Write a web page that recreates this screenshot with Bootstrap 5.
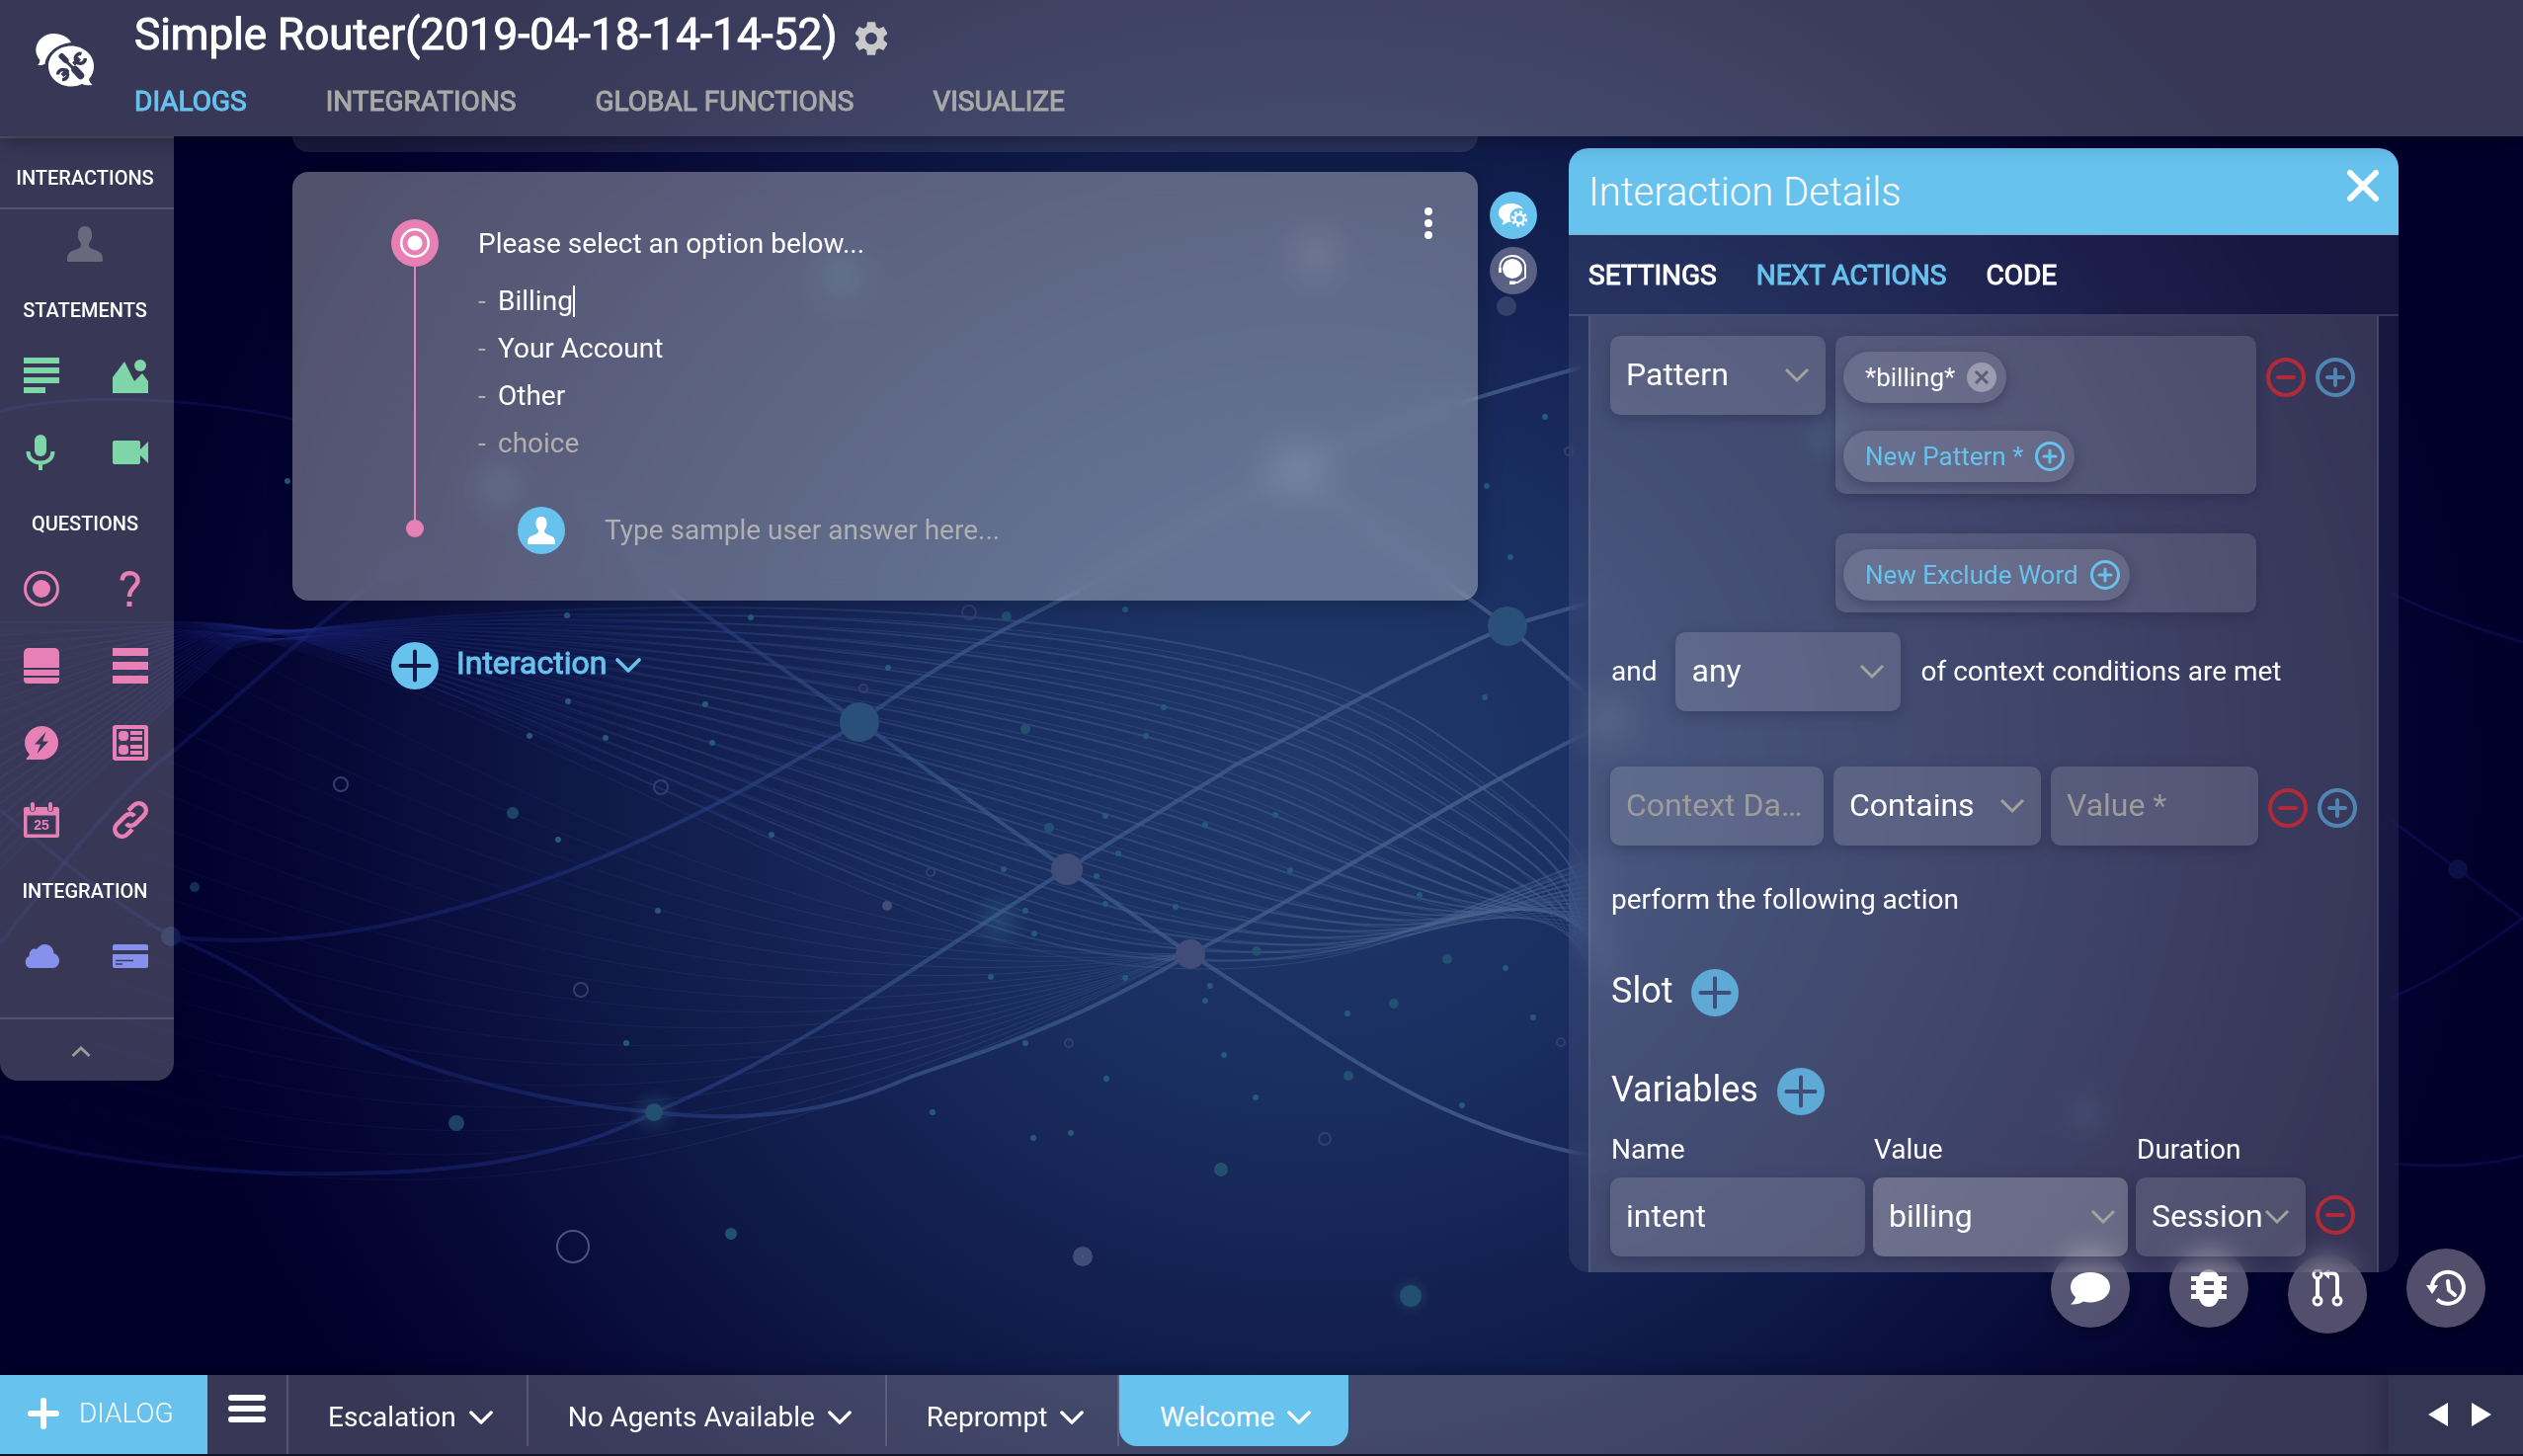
<!DOCTYPE html>
<html lang="en">
<head>
<meta charset="utf-8">
<meta name="viewport" content="width=device-width, initial-scale=1">
<title>Simple Router</title>
<link rel="stylesheet" href="https://cdn.jsdelivr.net/npm/bootstrap@5.3.0/dist/css/bootstrap.min.css">
<style>
:root{--sky:#68c2ee;--pink:#e680b5;--green:#7ed6a8;--iris:#8591ea;--dim:#a9a9a9}
body{font-family:Roboto,"Liberation Sans",sans-serif;font-size:28px;line-height:36px;color:#fff;background:#00002b;height:100vh;overflow:hidden}
svg{display:block;flex:none}
a{text-decoration:none}
.backdrop{position:fixed;inset:0;width:100%;height:100%;z-index:-1}
.glass{background:rgba(187,183,187,.3)}
.btn-plain{background:none;border:0;padding:0;color:inherit;line-height:0;display:block}
.sky{color:var(--sky)}.pink{color:var(--pink)}.green{color:var(--green)}.iris{color:var(--iris)}
.bg-sky{background:var(--sky)}.bg-pink{background:var(--pink)}.bg-slate{background:#5a6184}
.strong-thin{font-weight:400;-webkit-text-stroke:1px currentColor}
/* header */
.topbar{height:138px;box-shadow:0 0 24px rgba(0,0,0,.45);z-index:3}
.logo-cell{width:136px;padding:32px 0 0 36px}
.app-title{font-size:44px;line-height:52px;padding-top:9px}
.title-row{gap:18px}
.main-tabs{gap:80px;padding-top:24px}
.main-tabs a{color:var(--dim)}
.main-tabs a.active,.panel-tabs a.active{color:var(--sky)}
/* palette */
.palette{width:176px;border-radius:0 0 18px 18px;border-top:2px solid rgba(255,255,255,.14);overflow:hidden}
.palette h2{font-size:20px;line-height:24px;font-weight:500;text-align:center;margin:0;padding-right:4px}
.palette-head{padding:28px 0 18px;border-bottom:2px solid rgba(255,255,255,.14)}
.palette-person{height:69px;padding-right:4px;color:#69697d}
.palette .group-name{height:60px;padding-top:21px}
.tool-grid{display:grid;grid-template-columns:90px 90px;grid-auto-rows:78px;margin-left:-3px}
.tool-grid .btn-plain{display:grid;place-items:center}
.palette-foot{height:64px;margin-top:23px;padding-top:4px;border-top:2px solid rgba(255,255,255,.14);color:#9b9b98;padding-right:12px}
/* flow */
.workspace{min-height:0}
.flow{padding:0 12px 0 120px;min-width:0}
.card-prev{height:16px;border-radius:0 0 16px 16px;background:rgba(255,255,255,.1)}
.flow-card{margin-top:20px;height:434px;border-radius:16px;background:rgba(250,250,245,.33);backdrop-filter:blur(12px);box-shadow:0 2px 24px rgba(0,0,0,.25);padding:32px 46px 0 100px}
.rail{width:48px;padding-top:16px}
.rail-line{width:2px;height:258px;background:var(--pink)}
.rail-dot{width:18px;height:18px;border-radius:9px;background:var(--pink);margin-top:-2px}
.disc{width:48px;height:48px;border-radius:50%;display:grid;place-items:center;flex:none}
.flow-body{padding:17px 0 0 40px}
.bare{background:none;border:0;padding:0;color:#fff;outline:0;height:48px;line-height:48px;min-width:0}
.bare::placeholder{color:#b0b0b0;opacity:1}
.choice-row{height:48px}
.choice-row .dash{width:20px;color:#b0b0b0}
.choices{padding-top:10px}
.short{width:76px}
.caret{width:2px;height:32px;background:#fff}
.answer-row{padding:40px 0 0 40px}
.add-row{padding:42px 0 0 100px}
.add-row span{font-size:32px;line-height:40px;padding:0 9px 6px 18px}
.side-tools{width:80px;padding-top:56px}
.side-dot{width:20px;height:20px;border-radius:50%;background:rgba(200,200,200,.18);margin:2px 0 0 7px}
/* details panel */
.details{width:840px;margin:12px 126px 104px 0;border-radius:20px;overflow:hidden;background:rgba(170,170,200,.13);backdrop-filter:blur(12px);z-index:2}
.details-head{height:88px;background:var(--sky);border-bottom:2px solid #7ab6d6;padding:4px 20px 0}
.details-head h2{font-size:40px;font-weight:300;line-height:48px;margin:0}
.close-x{padding-bottom:14px}
.panel-tabs{height:82px;gap:40px;padding:2px 20px 0;border-bottom:2px solid rgba(255,255,255,.14)}
.panel-tabs a{color:#fff}
.details-body{margin:0 20px;border:2px solid rgba(255,255,255,.08);border-width:0 2px;background:rgba(180,176,180,.2);padding:20px 20px 0;min-height:0;overflow:hidden}
.details .form-control,.details .form-select{height:80px;font-size:32px;line-height:40px;border:0;border-radius:10px;color:#fff;background-color:rgba(255,255,255,.13);box-shadow:0 4px 14px rgba(20,20,50,.28);padding:0 16px 2px;text-overflow:ellipsis}
.details .form-control::placeholder{color:#9d9c9b;opacity:1}
.details .form-select{background-image:url("data:image/svg+xml,%3Csvg xmlns='http://www.w3.org/2000/svg' viewBox='0 0 26 16'%3E%3Cpath d='M2 2l11 11L24 2' fill='none' stroke='%23a3a39d' stroke-width='3'/%3E%3C/svg%3E");background-size:26px 16px;background-position:right 16px center}
.details .form-select.lit{background-color:rgba(255,255,255,.24);background-position:right 12px center}
.details .w-pattern{width:218px}.details .w-any{width:228px;margin:0 20px 0 19px}.details .w-ctx{width:216px;flex:none;padding-right:18px}.details .w-op{width:210px;flex:none}
.details .w-var{width:258px;flex:none}.details .w-dur{width:172px;flex:none;padding-right:10px}
.chip-col{width:426px;margin-left:10px}
.chip-box{border-radius:10px;background:rgba(255,255,255,.11);box-shadow:0 4px 14px rgba(20,20,50,.28);padding:16px 8px 12px;gap:28px}
.chip-box+.chip-box{margin-top:40px}
.chip-item{height:52px;border-radius:26px;background:rgba(255,255,255,.12);border:0;color:#fff;font-size:26px;line-height:32px;padding:0 10px 0 22px;gap:12px;box-shadow:0 4px 12px rgba(20,20,50,.3)}
.chip-item.add{color:var(--sky)}
.round-set{gap:10px;padding-top:4px;color:#4f85b0;align-items:center}
.round-top{height:80px;margin-left:10px}
.any-row{margin-top:20px;padding-left:1px}
.ctx-row{margin-top:56px;gap:10px}
.perform{margin:37px 0 0;padding-left:1px}
.sub-row{gap:19px;margin-top:52px;padding-left:1px}
.subhead{font-size:36px;line-height:44px;font-weight:400;margin:0;padding-bottom:4px}
.var-row{gap:8px;margin-top:17px}
.lab{height:46px;padding-left:1px}
.var-row .btn-plain{padding:0 0 22px 2px}
/* floating buttons */
.fabs{position:absolute;right:38px;bottom:42px;gap:40px;z-index:1;align-items:flex-start}
.fab{width:80px;height:80px;border-radius:50%;display:grid;place-items:center;background:rgba(205,195,205,.4);box-shadow:0 4px 12px rgba(0,0,0,.3);color:#fff}
.fab.low{margin-top:6px;padding-bottom:12px}
/* bottom bar */
.dialogbar{height:82px;border-bottom:2px solid #10142a;box-shadow:0 0 20px rgba(0,0,0,.3);z-index:3}
.new-dialog{width:210px;background:var(--sky);border:0;color:#fff;font-weight:300;gap:20px;padding:0 0 2px 28px}
.list-btn{width:82px;border-right:2px solid rgba(255,255,255,.14);padding-top:20px}
.dialog-tab{height:72px;border-right:2px solid rgba(255,255,255,.14);padding:14px 34px 0 40px;gap:13px;color:#fff}
.dialog-tab.active{background:var(--sky);border:0;border-radius:0 0 18px 18px;padding:14px 38px 0 41px}
.pager{width:136px;gap:24px;background:rgba(40,50,80,.25);box-shadow:-8px 0 14px rgba(30,20,50,.35);padding-left:8px}
</style>
<script src="https://cdn.jsdelivr.net/npm/bootstrap@5.3.0/dist/js/bootstrap.bundle.min.js" defer></script>
</head>
<body class="d-flex flex-column">

<svg class="backdrop" viewBox="0 0 2554 1474" preserveAspectRatio="xMidYMid slice" aria-hidden="true">
  <defs>
    <radialGradient id="bg" gradientUnits="userSpaceOnUse" cx="0" cy="0" r="1" gradientTransform="translate(1330 780) scale(1180 1080)">
      <stop offset="0" stop-color="#203a6b"/><stop offset=".3" stop-color="#1a2e60"/><stop offset=".6" stop-color="#101b4a"/><stop offset=".85" stop-color="#060835"/><stop offset="1" stop-color="#00002b"/>
    </radialGradient>
    <linearGradient id="ln" gradientUnits="userSpaceOnUse" x1="0" y1="0" x2="2554" y2="0">
      <stop offset="0" stop-color="#1a1f7a" stop-opacity=".25"/><stop offset=".2" stop-color="#1d2c80" stop-opacity=".5"/><stop offset=".38" stop-color="#3a5a8a" stop-opacity=".7"/><stop offset=".6" stop-color="#4a648f" stop-opacity=".75"/><stop offset=".8" stop-color="#1c2470" stop-opacity=".4"/><stop offset="1" stop-color="#10136a" stop-opacity=".4"/>
    </linearGradient>
    <radialGradient id="glow"><stop offset="0" stop-color="#3a7a9a" stop-opacity=".28"/><stop offset="1" stop-color="#3a7a9a" stop-opacity="0"/></radialGradient>
    <radialGradient id="glow2"><stop offset="0" stop-color="#9aa0c0" stop-opacity=".2"/><stop offset="1" stop-color="#9aa0c0" stop-opacity="0"/></radialGradient>
  </defs>
  <rect width="2554" height="1474" fill="url(#bg)"/>
  <g id="fan" fill="none" stroke="url(#ln)"></g>
  <g fill="none" stroke="url(#ln)" stroke-width="4">
    <path d="M0 955C60 880 120 800 176 760C260 690 330 620 420 560"/>
    <path d="M0 820C60 870 110 910 173 948C360 970 600 900 870 731C960 665 1010 640 1088 600L1308 476C1400 430 1500 400 1600 372"/>
    <path d="M560 480L681 600L870 731L1080 880L1205 966C1340 1050 1440 1140 1620 1172"/>
    <path d="M1308 476L1526 634L1620 715"/>
    <path d="M1620 607L1526 634C1400 690 1320 740 1253 773L1080 880C940 970 800 1070 662 1126C560 1180 430 1190 300 1188C180 1186 80 1170 0 1150"/>
    <path d="M173 948C240 975 270 998 300 1021C400 1080 540 1116 662 1126C760 1138 850 1124 922 1090C1060 1045 1130 1010 1205 966C1350 890 1450 820 1620 735"/>
  </g>
  <g fill="none" stroke="#1a1f80" stroke-opacity=".3" stroke-width="3">
    <path d="M0 416C90 395 210 405 300 425"/><path d="M2420 600C2470 625 2520 640 2554 650"/><path d="M2420 1178C2470 1182 2520 1180 2554 1170"/><path d="M2420 830L2488 880L2554 930"/><path d="M2420 1010C2470 990 2510 960 2554 930"/>
  </g>
  <circle cx="173" cy="948" r="10" fill="#101a50"/>
  <circle cx="2488" cy="880" r="10" fill="#0c1046"/>
  <g fill="#2a4f78"><circle cx="870" cy="731" r="20"/><circle cx="1526" cy="634" r="20"/></g>
  <g fill="#424c78"><circle cx="1080" cy="880" r="16"/><circle cx="1205" cy="966" r="15"/><circle cx="1096" cy="1272" r="10"/><circle cx="898" cy="917" r="5"/></g>
  <g fill="url(#glow)"><circle cx="662" cy="1126" r="26"/><circle cx="1011" cy="932" r="30"/><circle cx="1428" cy="1312" r="20"/><circle cx="851" cy="280" r="40"/><circle cx="505" cy="492" r="36"/><circle cx="1850" cy="440" r="32"/><circle cx="2112" cy="1128" r="26"/></g>
  <g fill="url(#glow2)"><circle cx="1313" cy="476" r="52"/><circle cx="1332" cy="258" r="40"/><circle cx="1630" cy="730" r="40"/></g>
  <g fill="#22506f">
    <circle cx="662" cy="1126" r="9"/><circle cx="1428" cy="1312" r="11"/><circle cx="462" cy="1137" r="8" opacity=".8"/><circle cx="740" cy="1249" r="6"/><circle cx="1236" cy="1184" r="7"/><circle cx="519" cy="823" r="6" opacity=".8"/><circle cx="197" cy="898" r="5" opacity=".6"/><circle cx="1038" cy="738" r="5"/><circle cx="1062" cy="838" r="5"/><circle cx="1272" cy="963" r="5"/><circle cx="1465" cy="971" r="5"/><circle cx="1411" cy="1016" r="5"/><circle cx="1365" cy="1089" r="5"/><circle cx="1019" cy="624" r="5"/>
  </g>
  <g id="specks" fill="#26597a"></g>
  <g fill="none" stroke="#343d70" stroke-width="2">
    <circle cx="580" cy="1262" r="16" stroke="#4a5280"/><circle cx="981" cy="620" r="7"/><circle cx="345" cy="794" r="7"/><circle cx="669" cy="797" r="7"/><circle cx="588" cy="1002" r="7"/><circle cx="1341" cy="1153" r="6"/><circle cx="874" cy="697" r="4"/><circle cx="942" cy="883" r="4"/><circle cx="1082" cy="1056" r="4"/><circle cx="1580" cy="1055" r="4"/><circle cx="1588" cy="457" r="4"/>
  </g>
</svg>
<script>
  // Two families of curves, each interpolated between a first and a last cubic.
  (function () {
    var mix = function (a, b, t) { return a.map(function (v, i) { return Math.round(v + (b[i] - v) * t); }); };
    var out = '';
    var upperA = [0, 880, 140, 740, 240, 650, 700, 570, 1200, 570, 1450, 740, 1560, 880, 1640, 1010];
    var upperB = [0, 630, 120, 630, 200, 630, 560, 680, 880, 940, 1130, 967, 1450, 925, 1640, 860];
    for (var i = 0; i < 20; i++) {
      var p = mix(upperA, upperB, i / 19);
      var d = 'Q' + p.slice(2, 6).join(' ') + 'C' + [400, 610 + i].concat(p.slice(8, 12)).join(' ') + 'S' + p.slice(12).join(' ');
      out += '<path stroke-width="2" opacity=".7" d="M' + p.slice(0, 2).join(' ') + d + '"/>';
      out += '<path stroke-width="1" opacity=".6" transform="translate(-12 8)" d="M' + p.slice(0, 2).join(' ') + d + '"/>';
    }
    var lowA = [200, 640, 480, 780, 800, 960, 1190, 966], lowB = [60, 1150, 420, 1240, 740, 1200, 1190, 970];
    for (i = 0; i < 17; i++) {
      p = mix(lowA, lowB, i / 16);
      out += '<path stroke-width="1" opacity=".5" d="M' + p.slice(0, 2).join(' ') + 'C' + p.slice(2).join(' ') + '"/>';
    }
    document.getElementById('fan').innerHTML = out;
    var s = [[574,623],[760,625],[899,676],[575,710],[714,713],[536,745],[613,747],[721,752],[565,850],[781,845],[666,922],[634,1056],[1119,826],[1220,835],[1291,825],[1178,716],[1160,745],[1503,706],[1132,864],[1016,880],[1110,887],[1119,915],[1190,918],[1038,922],[1047,945],[1306,881],[1437,906],[1003,989],[1139,990],[1225,998],[1220,1013],[1038,1056],[1239,1068],[1120,1092],[1271,1111],[1364,1026],[1480,1119],[1552,1030],[1524,980],[944,1126],[1046,1152],[1084,1147],[1505,492],[1564,422],[1529,564],[291,487],[1139,617]];
    document.getElementById('specks').innerHTML = s.map(function (c) { return '<circle cx="' + c[0] + '" cy="' + c[1] + '" r="3"/>'; }).join('');
  })();
</script>

<svg width="0" height="0" class="position-absolute" aria-hidden="true">
  <symbol id="i-person" viewBox="0 0 36 36"><path fill="currentColor" d="M18 0c-4 0-7 3-7 7.500v3c0 3 2 5 3 7v2.500c-.5 2-3 3-6 4-4.500 1.500-8 3-8 10 0 1.500.5 2 1.500 2h33c1 0 1.500-.5 1.500-2 0-7-3.500-8.500-8-10-3-1-5.500-2-6-4v-2.500c1-2 3-4 3-7v-3C25 3 22 0 18 0z"/></symbol>
  <symbol id="i-chev" viewBox="0 0 26 16"><path d="M2 2l11 11L24 2" fill="none" stroke="currentColor" stroke-width="3.600" stroke-linecap="round" stroke-linejoin="round"/></symbol>
  <symbol id="i-radio" viewBox="0 0 36 36"><circle cx="18" cy="18" r="16.500" fill="none" stroke="currentColor" stroke-width="3"/><circle cx="18" cy="18" r="9" fill="currentColor"/></symbol>
  <symbol id="i-minus" viewBox="0 0 40 40"><g fill="none" stroke="#b02a37" stroke-width="4"><circle cx="20" cy="20" r="18"/><path d="M12 20h16" stroke-linecap="round"/></g></symbol>
  <symbol id="i-plus" viewBox="0 0 40 40"><g fill="none" stroke="currentColor" stroke-width="4"><circle cx="20" cy="20" r="18"/><path d="M12 20h16M20 12v16" stroke-linecap="round"/></g></symbol>
  <symbol id="i-add" viewBox="0 0 48 48"><circle cx="24" cy="24" r="24" fill="#68c2ee"/><path d="M9.500 24h29M24 9.500v29" stroke="#101b4a" stroke-width="4" stroke-linecap="round"/></symbol>
  <symbol id="i-add2" viewBox="0 0 48 48"><circle cx="24" cy="24" r="24" fill="#5fa9d6"/><path d="M9.500 24h29M24 9.500v29" stroke="#3f4d78" stroke-width="4" stroke-linecap="round"/></symbol>
</svg>

<header class="topbar glass d-flex flex-shrink-0 position-relative">
  <div class="logo-cell">
    <svg width="60" height="56" viewBox="0 0 60 56" aria-label="Logo" role="img"><path fill="#fff" d="M18.500 2C8.500 2 .3 9.500.3 18.500c0 4 1.600 7.500 4 10.200.4 2-.6 3.700-2.300 5.300 3 .3 5.800-.4 7.500-1.200C10.500 23.500 20 12.800 36 11 33 5.500 26.500 2 18.500 2z"/><path fill="#fff" d="M36 14.500c-12.700 0-23 9.200-23 20.500s10.300 20.500 23 20.500c4 0 7.800-.8 11-2.500 3 1.300 6.500 1.400 10.700 1-2.500-2-3.500-4-3.600-6 3-3.500 5-8 5-13 0-11.300-10.400-20.500-23.100-20.500z"/><g fill="none" stroke="#383756"><path stroke-width="6" stroke-linecap="round" d="M26.500 25l4 4"/><path stroke-width="3" d="M29 28l9 9"/><path stroke-width="7.500" stroke-linecap="round" d="M40 38.500l5.500 6"/><path stroke-width="4" d="M27 44.500l6-6M38.500 33l6-6"/><path stroke-width="3.500" d="M46.500 22.500a5 5 0 1 0 3.800 4.500M22.500 43.500a5 5 0 1 1 4.500 5"/></g></svg>
  </div>
  <div>
    <div class="title-row d-flex align-items-center">
      <h1 class="app-title strong-thin mb-0">Simple Router(2019-04-18-14-14-52)</h1>
      <button class="btn-plain pt-3" aria-label="Settings"><svg width="32" height="34" viewBox="2.500 2 19 20"><path fill="#c9c9c9" d="M19.430 12.980c.04-.32.07-.64.07-.98s-.03-.66-.07-.98l2.110-1.650c.19-.15.24-.42.12-.64l-2-3.460c-.12-.22-.39-.3-.61-.22l-2.490 1c-.52-.4-1.080-.73-1.690-.98l-.38-2.650C14.460 2.180 14.250 2 14 2h-4c-.25 0-.46.18-.49.42l-.38 2.650c-.61.25-1.170.59-1.690.98l-2.490-1c-.23-.09-.49 0-.61.22l-2 3.460c-.13.22-.07.49.12.64l2.110 1.650c-.04.32-.07.65-.07.98s.03.66.07.98l-2.110 1.650c-.19.15-.24.42-.12.64l2 3.460c.12.22.39.3.61.22l2.490-1c.52.4 1.080.73 1.690.98l.38 2.650c.03.24.24.42.49.42h4c.25 0 .46-.18.49-.42l.38-2.650c.61-.25 1.170-.59 1.690-.98l2.490 1c.23.09.49 0 .61-.22l2-3.460c.12-.22.07-.49-.12-.64l-2.110-1.650zM12 15.500c-1.930 0-3.500-1.570-3.500-3.500s1.570-3.500 3.500-3.500 3.500 1.570 3.500 3.500-1.570 3.500-3.500 3.500z"/></svg></button>
    </div>
    <nav class="main-tabs strong-thin d-flex"><a class="active" href="#">DIALOGS</a><a href="#">INTEGRATIONS</a><a href="#">GLOBAL FUNCTIONS</a><a href="#">VISUALIZE</a></nav>
  </div>
</header>

<main class="workspace d-flex flex-grow-1 position-relative">
  <aside class="palette glass align-self-start">
    <div class="palette-head"><h2>INTERACTIONS</h2></div>
    <div class="palette-person d-flex align-items-center justify-content-center"><button class="btn-plain" aria-label="User"><svg width="36" height="36"><use href="#i-person"/></svg></button></div>
    <h2 class="group-name">STATEMENTS</h2>
    <div class="tool-grid green">
      <button class="btn-plain" aria-label="Text"><svg width="36" height="36" fill="currentColor"><path d="M0 0h36v6H0zM0 10h36v6H0zM0 20h36v6H0zM0 30h22v6H0z"/></svg></button>
      <button class="btn-plain" aria-label="Image"><svg width="36" height="36" fill="currentColor"><path d="M0 36V20L12 4l10 20 8-8 6 8v12z"/><circle cx="28" cy="8" r="6"/></svg></button>
      <button class="btn-plain" aria-label="Audio"><svg width="36" height="36"><rect x="11" y="0" width="12" height="22" rx="6" fill="currentColor"/><path d="M4.500 17c0 7 5 11.500 12.500 11.500S29.500 24 29.500 17M17 28v8" fill="none" stroke="currentColor" stroke-width="4"/></svg></button>
      <button class="btn-plain" aria-label="Video"><svg width="36" height="24" fill="currentColor"><rect width="28" height="24" rx="2"/><path d="M28 9l8-8v22l-8-8z"/></svg></button>
    </div>
    <h2 class="group-name">QUESTIONS</h2>
    <div class="tool-grid pink">
      <button class="btn-plain" aria-label="Single choice"><svg width="36" height="36"><use href="#i-radio"/></svg></button>
      <button class="btn-plain" aria-label="Question"><svg width="22" height="36"><path d="M2.500 9.500C3 5 6 2.300 10.500 2.300c5 0 8 3.200 8 7.200 0 6-8.500 7.500-8.500 16.500" fill="none" stroke="currentColor" stroke-width="4.500"/><path d="M7.500 31h5v5h-5z" fill="currentColor"/></svg></button>
      <button class="btn-plain" aria-label="Card"><svg width="36" height="36" fill="currentColor"><path d="M0 20V5a5 5 0 0 1 5-5h26a5 5 0 0 1 5 5v15zM0 22h36v6H0zM0 30h36v2a4 4 0 0 1-4 4H4a4 4 0 0 1-4-4z"/></svg></button>
      <button class="btn-plain" aria-label="List"><svg width="36" height="36" fill="currentColor"><path d="M0 0h36v8H0zM0 14h36v8H0zM0 28h36v8H0z"/></svg></button>
      <button class="btn-plain" aria-label="Quick reply"><svg width="36" height="36"><path fill="currentColor" fill-rule="evenodd" d="M18 1a17 17 0 0 1 0 34H3.500c-1 0-1.200-1-.6-1.600L6 30A17 17 0 0 1 18 1zm4.500 6L11 19.500h6L13.500 29 25 16.500h-6z"/></svg></button>
      <button class="btn-plain" aria-label="Form"><svg width="36" height="36" fill="currentColor"><path fill-rule="evenodd" d="M3 0h30a3 3 0 0 1 3 3v30a3 3 0 0 1-3 3H3a3 3 0 0 1-3-3V3a3 3 0 0 1 3-3zm1 4v28h28V4z"/><rect x="6" y="6" width="10" height="10" rx="4"/><rect x="6" y="20" width="10" height="10" rx="4"/><path d="M18 6h12v4H18zM18 12h12v4H18zM18 20h12v4H18zM18 26h12v4H18z"/></svg></button>
      <button class="btn-plain" aria-label="Date"><svg width="36" height="36"><path fill="currentColor" fill-rule="evenodd" d="M2 5h4v2c0 4 6 4 6 0V5h12v2c0 4 6 4 6 0V5h4a2 2 0 0 1 2 2v27a2 2 0 0 1-2 2H2a2 2 0 0 1-2-2V7a2 2 0 0 1 2-2zm1.500 8.500v19h29v-19z"/><path d="M9 2v5.500M27 2v5.500" stroke="currentColor" stroke-width="4" stroke-linecap="round"/><text x="18" y="28" text-anchor="middle" font-size="14" font-weight="700" font-family="Liberation Sans,sans-serif" fill="currentColor">25</text></svg></button>
      <button class="btn-plain" aria-label="Link"><svg width="38" height="38" viewBox="0 0 38 38" fill="none" stroke="currentColor" stroke-width="4.500"><path d="M17 9.500l5-5c3-3 7.500-3 10.500-.3 3 3 3 7.500 0 10.500l-8 8c-3 3-7.500 3-9.500 0"/><path d="M21 28.500l-5 5c-3 3-7.500 3-10.500.3-3-3-3-7.500 0-10.500l8-8c3-3 7.500-3 9.500 0"/></svg></button>
    </div>
    <h2 class="group-name">INTEGRATION</h2>
    <div class="tool-grid iris">
      <button class="btn-plain" aria-label="Cloud"><svg width="36" height="24" fill="currentColor"><path d="M6 24a6.500 6.500 0 0 1-.5-12C5.500 6 9.500 3.500 13 5c2-3 5-5 8.500-5 5 0 9 4 9 9.500 3.500.5 5.500 3.500 5.500 7 0 4-3 7.500-6.500 7.500z"/></svg></button>
      <button class="btn-plain" aria-label="Payment"><svg width="36" height="24"><path fill="currentColor" d="M0 6V2a2 2 0 0 1 2-2h32a2 2 0 0 1 2 2v4zM0 10h36v12a2 2 0 0 1-2 2H2a2 2 0 0 1-2-2z"/><path d="M3 16.500h18M3 20h7" stroke="#383c60" stroke-width="1.500"/></svg></button>
    </div>
    <div class="palette-foot d-flex justify-content-center align-items-center"><button class="btn-plain" aria-label="Collapse"><svg width="20" height="12" viewBox="0 0 20 12"><path d="M1.500 10L10 2l8.500 8" fill="none" stroke="currentColor" stroke-width="3"/></svg></button></div>
  </aside>

  <section class="flow flex-grow-1">
    <div class="card-prev"></div>
    <div class="flow-card d-flex">
      <div class="rail d-flex flex-column align-items-center">
        <span class="disc bg-pink"><svg width="30" height="30"><use href="#i-radio"/></svg></span>
        <div class="rail-line"></div><div class="rail-dot"></div>
      </div>
      <div class="flow-body flex-grow-1">
        <input class="bare w-100" aria-label="Prompt" value="Please select an option below...">
        <div class="choices">
          <div class="choice-row d-flex align-items-center"><span class="dash">-</span><input class="bare short" aria-label="Choice 1" value="Billing"><span class="caret"></span></div>
          <div class="choice-row d-flex align-items-center"><span class="dash">-</span><input class="bare flex-grow-1" aria-label="Choice 2" value="Your Account"></div>
          <div class="choice-row d-flex align-items-center"><span class="dash">-</span><input class="bare flex-grow-1" aria-label="Choice 3" value="Other"></div>
          <div class="choice-row d-flex align-items-center"><span class="dash">-</span><input class="bare flex-grow-1" aria-label="New choice" placeholder="choice"></div>
        </div>
        <div class="answer-row d-flex gap-4">
          <span class="disc bg-sky"><svg width="28" height="28"><use href="#i-person"/></svg></span>
          <input class="bare flex-grow-1 ms-3" aria-label="Sample answer" placeholder="Type sample user answer here...">
        </div>
      </div>
      <button class="btn-plain align-self-start" aria-label="More"><svg width="8" height="40" fill="#fff"><circle cx="4" cy="8" r="4"/><circle cx="4" cy="20" r="4"/><circle cx="4" cy="32" r="4"/></svg></button>
    </div>
    <div class="add-row d-flex align-items-center sky">
      <button class="btn-plain" aria-label="Add interaction"><svg width="48" height="48"><use href="#i-add"/></svg></button>
      <span class="strong-thin">Interaction</span>
      <svg width="26" height="16"><use href="#i-chev"/></svg>
    </div>
  </section>

  <div class="side-tools">
    <button class="btn-plain disc bg-sky mb-2" aria-label="Interaction settings"><svg width="30" height="24" viewBox="0 0 30 24"><path fill="#fff" d="M12.500 0C5.500 0 0 4 0 9.500c0 3.500 2 6 5 7.700-.2 1.500-1 3-2 4.300 2.500-.3 5-1.500 6.500-2.700H13A9 9 0 0 1 25 6C23.500 2.500 18.500 0 12.500 0z"/><circle cx="21" cy="15.500" r="4.500" fill="none" stroke="#fff" stroke-width="2.500"/><circle cx="21" cy="15.500" r="7" fill="none" stroke="#fff" stroke-width="2.500" stroke-dasharray="2.750"/></svg></button>
    <button class="btn-plain disc bg-slate" aria-label="Agent"><svg width="30" height="32" viewBox="0 0 30 32"><circle cx="14" cy="14" r="10" fill="#fff"/><path d="M1.500 15v-3c0-6 5.500-11 12.500-11s13 5 13 11v11l-8 5h-5" fill="none" stroke="#fff" stroke-width="1.800"/><path d="M0 13h3v5H0zM26 13h2v5h-2zM11 26.500h6v3.500h-6z" fill="#fff"/></svg></button>
    <div class="side-dot"></div>
  </div>

  <section class="details d-flex flex-column flex-shrink-0 position-relative">
    <div class="details-head d-flex flex-shrink-0 align-items-center justify-content-between">
      <h2>Interaction Details</h2>
      <button class="btn-plain close-x" aria-label="Close"><svg width="32" height="32"><path d="M3 3l26 26M29 3L3 29" stroke="#fff" stroke-width="6" stroke-linecap="round"/></svg></button>
    </div>
    <nav class="panel-tabs strong-thin d-flex flex-shrink-0 align-items-center"><a href="#">SETTINGS</a><a class="active" href="#">NEXT ACTIONS</a><a href="#">CODE</a></nav>
    <div class="details-body flex-grow-1">
      <div class="d-flex">
        <select class="form-select w-pattern flex-shrink-0" aria-label="Match type"><option>Pattern</option></select>
        <div class="chip-col flex-shrink-0">
          <div class="chip-box d-flex flex-column align-items-start">
            <span class="chip-item d-flex align-items-center">*billing*<button class="btn-plain" aria-label="Remove pattern"><svg width="30" height="30"><circle cx="15" cy="15" r="15" fill="#9c9bb0"/><path d="M9 9l12 12M21 9L9 21" stroke="#5c5c7c" stroke-width="3"/></svg></button></span>
            <button class="chip-item add d-flex align-items-center">New Pattern *<svg width="30" height="30"><use href="#i-plus"/></svg></button>
          </div>
          <div class="chip-box d-flex flex-column align-items-start">
            <button class="chip-item add d-flex align-items-center">New Exclude Word<svg width="30" height="30"><use href="#i-plus"/></svg></button>
          </div>
        </div>
        <div class="round-set round-top d-flex"><button class="btn-plain" aria-label="Remove"><svg width="40" height="40"><use href="#i-minus"/></svg></button><button class="btn-plain" aria-label="Add"><svg width="40" height="40"><use href="#i-plus"/></svg></button></div>
      </div>
      <div class="any-row d-flex align-items-center">
        <label for="anyall">and</label>
        <select id="anyall" class="form-select w-any"><option>any</option></select>
        <span>of context conditions are met</span>
      </div>
      <div class="ctx-row d-flex align-items-center">
        <input class="form-control w-ctx" placeholder="Context Data *" aria-label="Context data">
        <select class="form-select w-op" aria-label="Operator"><option>Contains</option></select>
        <input class="form-control w-op" placeholder="Value *" aria-label="Value">
        <div class="round-set d-flex"><button class="btn-plain" aria-label="Remove"><svg width="40" height="40"><use href="#i-minus"/></svg></button><button class="btn-plain" aria-label="Add"><svg width="40" height="40"><use href="#i-plus"/></svg></button></div>
      </div>
      <p class="perform">perform the following action</p>
      <div class="sub-row d-flex align-items-center"><h3 class="subhead">Slot</h3><button class="btn-plain" aria-label="Add slot"><svg width="48" height="48"><use href="#i-add2"/></svg></button></div>
      <div class="sub-row d-flex align-items-center"><h3 class="subhead">Variables</h3><button class="btn-plain" aria-label="Add variable"><svg width="48" height="48"><use href="#i-add2"/></svg></button></div>
      <div class="var-row d-flex align-items-end">
        <div><label class="lab d-block" for="vname">Name</label><input id="vname" class="form-control w-var" value="intent"></div>
        <div><label class="lab d-block" for="vval">Value</label><select id="vval" class="form-select w-var lit"><option>billing</option></select></div>
        <div><label class="lab d-block" for="vdur">Duration</label><select id="vdur" class="form-select w-dur"><option>Session</option></select></div>
        <button class="btn-plain" aria-label="Remove variable"><svg width="40" height="40"><use href="#i-minus"/></svg></button>
      </div>
    </div>
  </section>

  <div class="fabs d-flex">
    <button class="btn-plain fab" aria-label="Chat"><svg width="40" height="36" fill="#fff"><path d="M20 2C9 2 0 8 0 17c0 4.500 2 7.500 5 10-.5 3-2.500 5-5 7.500 6 .5 10-1 13-3 2.500.7 4.500 1 7 1 11 0 20-6.500 20-15.500S31 2 20 2z"/></svg></button>
    <button class="btn-plain fab" aria-label="Debug"><svg width="36" height="38"><path fill="#fff" fill-rule="evenodd" d="M18 0c5 0 8 3 10 7h8v5h-5v4h5v5h-5v4h5v5h-8c-2 5-5 8-10 8s-8-3-10-8H0v-5h5v-4H0v-5h5v-4H0V7h8c2-4 5-7 10-7zm-5 12v4h10v-4zm0 9v4h10v-4z"/></svg></button>
    <button class="btn-plain fab low" aria-label="Branches"><svg width="32" height="38" fill="none" stroke="#fff" stroke-width="3"><circle cx="6" cy="5" r="4"/><circle cx="6" cy="32" r="4"/><circle cx="26" cy="32" r="4"/><path stroke-width="4" d="M6 9v19M26 28V9c0-3-2-5-5-5h-5"/><path d="M18 0l-7 4 7 6z" fill="#fff" stroke="none"/></svg></button>
    <button class="btn-plain fab" aria-label="History"><svg width="40" height="38"><path d="M11 30.500A16 16 0 1 0 6 17" fill="none" stroke="#fff" stroke-width="4"/><path d="M0 16h12l-6 9z" fill="#fff"/><path d="M22 12l1 9 6 5" fill="none" stroke="#fff" stroke-width="4" stroke-linecap="round" stroke-linejoin="round"/></svg></button>
  </div>
</main>

<footer class="dialogbar glass d-flex flex-shrink-0 position-relative">
  <button class="new-dialog d-flex align-items-center"><svg width="32" height="32"><path d="M3 16h26M16 3v26" stroke="#fff" stroke-width="6" stroke-linecap="round"/></svg>DIALOG</button>
  <div class="list-btn d-flex justify-content-center align-items-start"><button class="btn-plain" aria-label="All dialogs"><svg width="38" height="30"><path d="M3 3h32M3 14h32M3 25h32" stroke="#fff" stroke-width="6" stroke-linecap="round"/></svg></button></div>
  <a class="dialog-tab d-flex align-items-center" href="#">Escalation<svg width="24" height="15"><use href="#i-chev"/></svg></a>
  <a class="dialog-tab d-flex align-items-center" href="#">No Agents Available<svg width="24" height="15"><use href="#i-chev"/></svg></a>
  <a class="dialog-tab d-flex align-items-center" href="#">Reprompt<svg width="24" height="15"><use href="#i-chev"/></svg></a>
  <a class="dialog-tab active d-flex align-items-center" href="#">Welcome<svg width="24" height="15"><use href="#i-chev"/></svg></a>
  <div class="pager ms-auto d-flex align-items-center justify-content-center">
    <button class="btn-plain" aria-label="Previous"><svg width="20" height="24"><path d="M20 0v24L0 12z" fill="#fff"/></svg></button>
    <button class="btn-plain" aria-label="Next"><svg width="20" height="24"><path d="M0 0v24l20-12z" fill="#fff"/></svg></button>
  </div>
</footer>
</body>
</html>
